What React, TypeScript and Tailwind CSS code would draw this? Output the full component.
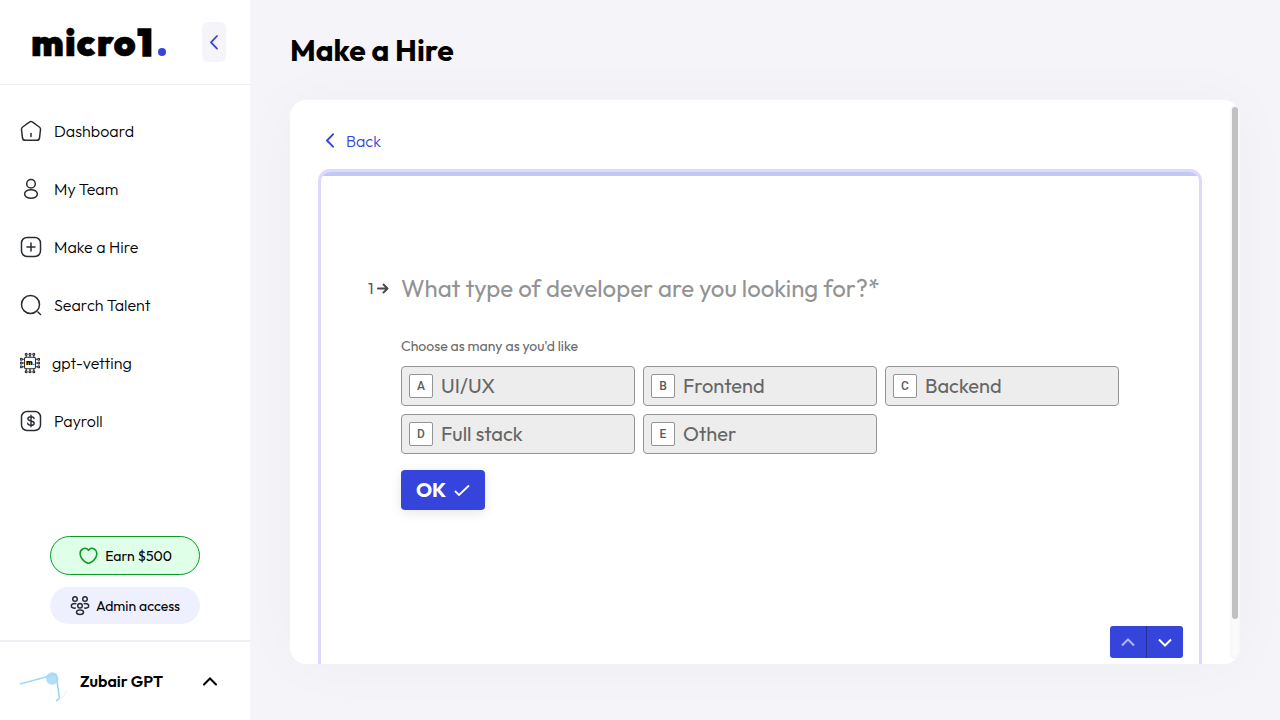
import type { ReactNode } from 'react';

const stroke = {
  fill: 'none',
  stroke: 'currentColor',
  strokeLinecap: 'round' as const,
  strokeLinejoin: 'round' as const,
};

function Icon({ children, size = 22, width = 1.5 }: { children: ReactNode; size?: number; width?: number }) {
  return (
    <svg width={size} height={size} viewBox={`0 0 ${size} ${size}`} {...stroke} strokeWidth={width} className="shrink-0">
      {children}
    </svg>
  );
}

function HomeIcon() {
  return (
    <Icon>
      <path d="M9.7 1.9Q11 .9 12.3 1.9L19.3 7Q20.7 8 20.5 9.6L19.5 18Q19.1 20.3 16.8 20.3H5.2Q2.9 20.3 2.5 18L1.5 9.6Q1.3 8 2.7 7Z" />
      <path d="M11 13.5v3" />
    </Icon>
  );
}

function UserIcon() {
  return (
    <Icon>
      <circle cx="11" cy="5.7" r="4.3" />
      <ellipse cx="11" cy="16" rx="6.4" ry="4.3" />
    </Icon>
  );
}

function PlusIcon() {
  return (
    <Icon>
      <rect x="1.5" y="1.5" width="19" height="19" rx="5.5" />
      <path d="M11 7v8M7 11h8" />
    </Icon>
  );
}

function SearchIcon() {
  return (
    <Icon>
      <circle cx="10.5" cy="10.5" r="9" />
      <path d="M18 18l2.5 2.5" />
    </Icon>
  );
}

function ChipIcon() {
  return (
    <svg width="20" height="22" viewBox="0 0 20 22" {...stroke} strokeWidth="1.1" className="shrink-0">
      <rect x="4.500" y="5.300" width="11" height="11.400" rx="1.500" />
      {[6.2, 10, 13.8].map((p) => (
        <g key={p}>
          <path d={`M${p} 5V3.2M${p} 17v1.8M4 ${p + 1}H2.3M16 ${p + 1}h1.7`} />
          <circle cx={p} cy="2.3" r="1" />
          <circle cx={p} cy="19.7" r="1" />
          <circle cx="1.3" cy={p + 1} r="1" />
          <circle cx="18.7" cy={p + 1} r="1" />
        </g>
      ))}
      <text x="6.1" y="12.800" fontSize="7.500" fontWeight="900" fontFamily="Outfit, Lato, sans-serif" fill="#000" stroke="none">m</text>
      <circle cx="13.9" cy="12.400" r=".7" fill="#3544da" stroke="none" />
    </svg>
  );
}

function PayrollIcon() {
  return (
    <Icon>
      <rect x="1.5" y="1.5" width="19" height="19" rx="5.5" />
      <path d="M11 5.200v11.600M14.100 8.600C14 7.400 12.800 6.700 11 6.700S7.900 7.500 7.900 8.800c0 3.100 6.300 1.300 6.300 4.400 0 1.400-1.300 2.100-3.200 2.100s-3.200-.7-3.300-2" strokeWidth="1.4" />
    </Icon>
  );
}

function HeartIcon() {
  return (
    <svg width="20" height="18" viewBox="-1 -0.300 21 19" {...stroke} strokeWidth="1.6" className="shrink-0 text-[#0a9b24]">
      <path d="M10 3.1C8.400 1 5.800.7 3.900 1.800 1.500 3.200.8 6 1.500 8.700c.9 3.500 3.600 6.100 6.700 7.600q1.800.9 3.600 0c3.100-1.500 5.800-4.100 6.700-7.600.7-2.700 0-5.500-2.400-6.900C14.200.7 11.600 1 10 3.100Z" />
    </svg>
  );
}

function GroupIcon() {
  return (
    <svg width="20" height="20" viewBox="0 0 20 20" {...stroke} strokeWidth="1.5" className="shrink-0 text-[#292d32]">
      <circle cx="5" cy="3" r="2.300" />
      <circle cx="15" cy="3" r="2.300" />
      <circle cx="10" cy="9.800" r="2.300" />
      <ellipse cx="10" cy="16.200" rx="3.500" ry="2.200" />
      <path d="M5.800 7.700C3.200 7.200 1.300 8.200 1.300 9.900c0 1.500 1.700 2.400 4 2.200M14.200 7.700c2.600-.5 4.500.5 4.500 2.200 0 1.500-1.700 2.400-4 2.200" />
    </svg>
  );
}

const menu = [
  { icon: <HomeIcon />, label: 'Dashboard' },
  { icon: <UserIcon />, label: 'My Team' },
  { icon: <PlusIcon />, label: 'Make a Hire' },
  { icon: <SearchIcon />, label: 'Search Talent' },
  { icon: <ChipIcon />, label: 'gpt-vetting' },
  { icon: <PayrollIcon />, label: 'Payroll' },
];

const options = [
  { letter: 'A', label: 'UI/UX' },
  { letter: 'B', label: 'Frontend' },
  { letter: 'C', label: 'Backend' },
  { letter: 'D', label: 'Full stack' },
  { letter: 'E', label: 'Other' },
];

function Sidebar() {
  return (
    <aside className="flex h-full w-[250px] shrink-0 flex-col bg-white">
      <div className="flex h-[85px] shrink-0 items-center justify-between border-b border-[#ececf4] pr-6 pl-[31px]">
        <div className="flex items-baseline pt-px text-[37px] leading-none font-black">
          <span className="tracking-[1.2px] [-webkit-text-stroke:0.5px_black]">micro</span>
          <span className="w-[21px] pl-px [-webkit-text-stroke:1.6px_black]">1</span>
          <span className="size-2 rounded-full bg-[#3544da]" />
        </div>
        <button className="flex h-10 w-6 items-center justify-center rounded-md bg-[#f4f4fa] text-[#3544da]">
          <svg width="10" height="16" viewBox="0 0 10 16" {...stroke} strokeWidth="1.8"><path d="M8 2 2 8.300 8 14.600" /></svg>
        </button>
      </div>
      <nav className="flex flex-col pt-[17px] pl-5">
        {menu.map((m) => (
          <a key={m.label} className="flex h-[58px] items-center text-[#292d32]">
            {m.icon}
            <span className="ml-3 text-base font-light tracking-[0.03px] whitespace-nowrap text-black">{m.label}</span>
          </a>
        ))}
      </nav>
      <div className="mt-auto flex flex-col items-center gap-3 pb-4 text-sm font-normal">
        <button className="flex h-[39px] w-[150px] items-center justify-center gap-[7px] rounded-full border border-[#0a9b24] bg-[#e0ffe9]">
          <HeartIcon /><span>Earn $500</span>
        </button>
        <button className="flex h-[37px] w-[150px] items-center justify-center gap-1.5 rounded-full bg-[#eff0ff]">
          <GroupIcon /><span>Admin access</span>
        </button>
      </div>
      <div className="flex h-20 shrink-0 items-center border-t-2 border-[#f0eff5] pl-5">
        <svg width="48" height="48" viewBox="0 0 48 48" fill="none" className="shrink-0">
          <path d="M0 27 36 17.300" stroke="#9bd8f5" strokeWidth="1.500" />
          <path d="M36 17.300 39.500 41.500 36 44" stroke="#9bd8f5" strokeWidth="1.600" />
          <path d="M41 42Q45 38 46.500 34" stroke="#d3eefb" strokeWidth=".7" />
          <circle cx="32.200" cy="21.500" r="6.200" fill="#a4d9f5" fillOpacity=".85" />
        </svg>
        <span className="ml-3 w-[122px] text-base font-semibold">Zubair GPT</span>
        <svg width="16" height="10" viewBox="0 0 16 10" {...stroke} strokeWidth="2"><path d="M2 8.500 8 2.500l6 6" strokeLinejoin="miter" /></svg>
      </div>
    </aside>
  );
}

function FormPanel() {
  return (
    <div className="flex h-[600px] w-[884px] shrink-0 flex-col overflow-hidden rounded-[12px] border-[3px] border-[#ddd8ff] bg-white">
      <div className="h-1 shrink-0 bg-[#c2c7f4]" />
      <div className="flex pt-[95px] pl-[47px] text-[#5c5c5c]">
        <div className="flex h-[34px] w-[33px] items-center gap-[3px] text-base font-normal">
          <span className="w-1.5">1</span>
          <svg width="12" height="11" viewBox="0 0 12 11" {...stroke} strokeWidth="2" className="text-[#4a4a4a]"><path d="M1 5.500h9M6.500 1.500l4 4-4 4" /></svg>
        </div>
        <div>
          <h2 className="h-[34px] text-2xl leading-[34px] font-normal whitespace-nowrap text-[#939393]">What type of developer are you looking for?*</h2>
          <p className="mt-[31px] h-5 text-sm font-normal text-[#6a6a6a]">Choose as many as you'd like</p>
          <div className="mt-[10px] grid grid-cols-[repeat(3,234px)] gap-2">
            {options.map((o) => (
              <button key={o.letter} className="flex h-10 items-center gap-2 rounded border border-[#949494] bg-[#ededed] px-[7px] text-xl font-normal text-[#666]">
                <span className="flex size-6 items-center justify-center rounded-[2px] border border-[#949494] bg-white font-['Roboto'] text-xs font-medium text-[#5c5c5c]">{o.letter}</span>
                <span>{o.label}</span>
              </button>
            ))}
          </div>
          <button className="mt-4 flex h-10 w-[84px] items-center rounded bg-[#3544da] pl-[15px] text-left text-xl font-bold text-white shadow-[0_3px_12px_rgba(0,0,0,0.1)]">
            <span className="w-[38px]">OK</span>
            <svg width="16" height="13" viewBox="0 0 16 13" {...stroke} strokeWidth="1.8"><path d="M1 7 5 11 15 1.500" strokeLinecap="butt" strokeLinejoin="miter" /></svg>
          </button>
        </div>
      </div>
      <div className="mt-[116px] mr-4 flex h-8 shrink-0 self-end overflow-hidden rounded-[3px] bg-[#3544da] text-white">
        <span className="flex w-[37px] items-center justify-center border-r border-[#262f94] text-[#aeb4f0]">
          <svg width="14" height="9" viewBox="0 0 14 9" {...stroke} strokeWidth="2" strokeLinecap="butt" strokeLinejoin="miter"><path d="M1 7.500l6-6 6 6" /></svg>
        </span>
        <span className="flex w-9 items-center justify-center">
          <svg width="14" height="9" viewBox="0 0 14 9" {...stroke} strokeWidth="2" strokeLinecap="butt" strokeLinejoin="miter"><path d="M1 1.500l6 6 6-6" /></svg>
        </span>
      </div>
    </div>
  );
}

export default function App() {
  return (
    <div className="flex h-[720px] w-[1280px] overflow-hidden bg-[#f4f4f9] font-['Outfit','Lato',sans-serif] text-black">
      <Sidebar />
      <main className="flex flex-1 flex-col pl-10">
        <h1 className="flex h-[100px] items-center text-[30px] font-bold">Make a Hire</h1>
        <section className="flex h-[564px] w-[950px] justify-between overflow-hidden rounded-2xl bg-white shadow-[0_0_60px_rgba(0,0,0,0.03)]">
          <div className="flex flex-col pl-7">
            <button className="mt-[31px] flex h-5 items-center gap-2.5 pl-[6px] text-base font-light text-[#3544da]">
              <svg width="12" height="16" viewBox="0 0 12 16" {...stroke} strokeWidth="1.9"><path d="M9 1.300 3 7.500 9 13.700" /></svg>
              <span>Back</span>
            </button>
            <div className="mt-[18px]"><FormPanel /></div>
          </div>
          <div className="mt-1.5 mb-[5px] w-2.5 rounded-full bg-[#fbfbfb] px-0.5 pt-px shadow-[inset_0_0_5px_rgba(0,0,0,0.04)]">
            <div className="h-[512px] w-1.5 rounded-full bg-[#c1c1c1]" />
          </div>
        </section>
      </main>
    </div>
  );
}
